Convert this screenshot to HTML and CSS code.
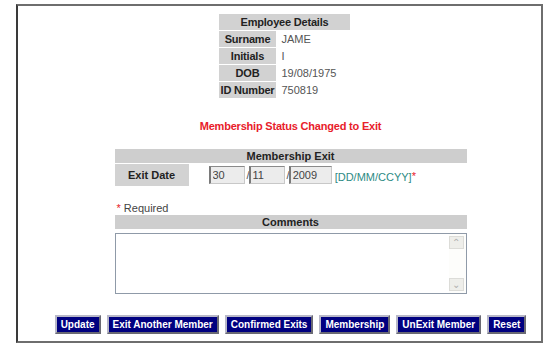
FILE: index.html
```html
<!DOCTYPE html>
<html lang="en">
<head>
    <meta charset="UTF-8">
    <title>Membership Exit</title>
<link rel="stylesheet" href="styles.css">
</head>
<body>
    <div class="frame">
        <table class="details">
            <tr><th colspan="2" class="head">Employee Details</th></tr>
            <tr><th>Surname</th><td>JAME</td></tr>
            <tr><th>Initials</th><td>I</td></tr>
            <tr><th>DOB</th><td>19/08/1975</td></tr>
            <tr><th>ID Number</th><td>750819</td></tr>
        </table>

        <p class="message">Membership Status Changed to Exit</p>

        <div class="section">
            <div class="bar">Membership Exit</div>
            <div class="exit-row">
                <div class="label">Exit Date</div>
                <div class="date">
                    <input class="dd" type="text" value="30">
                    <span class="slash">/</span>
                    <input class="dd" type="text" value="11">
                    <span class="slash">/</span>
                    <input class="yyyy" type="text" value="2009">
                    <span class="format">[DD/MM/CCYY]</span><span class="star">*</span>
                </div>
            </div>

            <p class="required"><span class="star">*</span> Required</p>

            <div class="bar">Comments</div>
            <div class="comments">
                <textarea></textarea>
                <div class="scroll">
                    <span class="arrow">&#8963;</span>
                    <span class="arrow">&#8964;</span>
                </div>
            </div>
        </div>

        <div class="buttons">
            <button>Update</button>
            <button>Exit Another Member</button>
            <button>Confirmed Exits</button>
            <button>Membership</button>
            <button>UnExit Member</button>
            <button>Reset</button>
        </div>
    </div>
</body>
</html>
```

FILE: styles.css
```css
*{
    margin: 0;
    box-sizing: border-box;
}
body{
    background-color: #fff;
    font-family: "Liberation Sans", Arial, sans-serif;
    font-size: 11px;
    color: #333;
}
.frame{
    width: 527px;
    height: 339px;
    margin: 4px 0 0 16px;
    border: 2px solid #6e6e6e;
    border-left-color: #3a3a3a;
    padding: 7px 0 0 22px;
}

/* employee details */
.details{
    border-collapse: separate;
    border-spacing: 2px 1px;
    margin: 0 auto;
    position: relative;
    left: -6px;
}
.details th{
    background-color: #d2d2d2;
    font-weight: bold;
    color: #222;
    height: 16px;
    padding: 0 2px;
    text-align: center;
    letter-spacing: -0.2px;
}
.details th.head{
    padding: 0 10px;
}
.details td{
    height: 16px;
    padding: 0 3px;
    color: #555;
    width: 72px;
}

.message{
    color: #e8202a;
    font-weight: bold;
    font-size: 11px;
    letter-spacing: -0.2px;
    text-align: center;
    margin-top: 20px;
    line-height: 14px;
}

/* membership exit */
.section{
    width: 352px;
    margin: 16px auto 0;
}
.bar{
    background-color: #cecece;
    color: #222;
    font-weight: bold;
    text-align: center;
    height: 14px;
    line-height: 14px;
}
.exit-row{
    display: flex;
    align-items: center;
    margin-top: 1px;
    gap: 20px;
}
.exit-row .label{
    background-color: #d2d2d2;
    color: #222;
    font-weight: bold;
    width: 74px;
    height: 22px;
    line-height: 22px;
    text-align: center;
}
.date{
    display: flex;
    align-items: center;
}
.date input{
    height: 18px;
    border: 1px solid #c8c8c8;
    border-top-color: #8a8a8a;
    border-left: 2px solid #7a7a7a;
    background-color: #ececec;
    font-family: "Liberation Sans", Arial, sans-serif;
    font-size: 11px;
    color: #444;
    padding: 0 2px;
}
.date .dd{
    width: 36px;
}
.date .yyyy{
    width: 43px;
}
.slash{
    margin: 0 -1px 0 2px;
    color: #555;
}
.format{
    color: #2d8a84;
    margin-left: 3px;
    margin-top: 3px;
}
.star{
    color: #e8202a;
}
.date .star{
    margin-top: 1px;
}

.required{
    margin-top: 16px;
    line-height: 13px;
    color: #444;
    padding-left: 2px;
}

/* comments */
.comments{
    display: flex;
    margin-top: 4px;
    height: 61px;
    border: 1px solid #8f9aa8;
}
.comments textarea{
    flex: 1;
    border: none;
    resize: none;
    outline: none;
}
.scroll{
    width: 17px;
    display: flex;
    flex-direction: column;
    justify-content: space-between;
    padding: 2px 2px 2px 0;
    background-color: #fdfdfb;
}
.arrow{
    height: 13px;
    background-color: #eeeeea;
    border: 1px solid #dcdcd8;
    color: #b0b0b0;
    font-size: 10px;
    line-height: 11px;
    text-align: center;
}

/* buttons */
.buttons{
    display: flex;
    justify-content: center;
    gap: 6px;
    margin-top: 21px;
    margin-left: 0;
}
button{
    background-color: #000080;
    color: #fff;
    font-family: "Liberation Sans", Arial, sans-serif;
    font-weight: bold;
    font-size: 10px;
    white-space: nowrap;
    flex: none;
    height: 19px;
    padding: 0 4px;
    border: 2px outset #b8b8c8;
}
```
